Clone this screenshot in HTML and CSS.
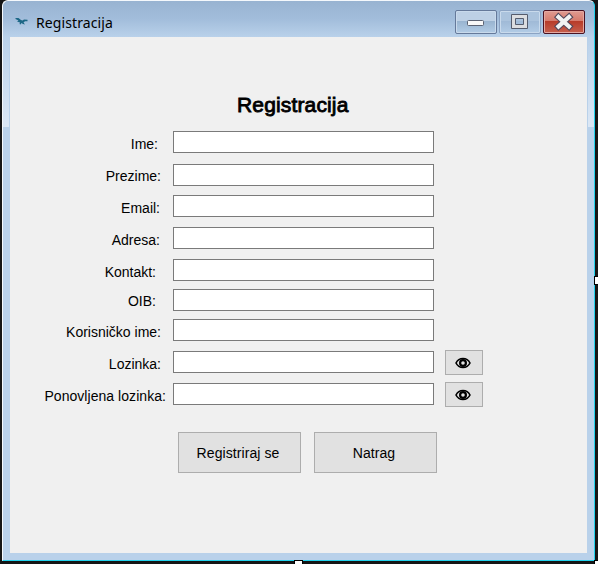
FILE: index.html
```
<!DOCTYPE html>
<html lang="hr">
<head>
<meta charset="utf-8">
<title>Registracija</title>
<link rel="stylesheet" href="styles.css">
</head>
<body>
<div class="window">
  <header class="titlebar">
    <svg class="app-icon" width="14" height="10" viewBox="0 0 14 10"><path d="M.5 1h3L6 3l1.500.5L9 2.500l3.500.2v1.500H10L8.500 5.500 10 7.500 8 7 6.500 6 5.500 7.500 4.500 7l.5-1.500L2 4.500l1.500-1L.5 2z" fill="#1c6786"/></svg>
    <span class="caption">Registracija</span>
    <div class="controls">
      <span class="control"><svg width="40" height="22" viewBox="0 0 40 22"><rect x="11.500" y="9.500" width="16" height="5" rx="1" fill="#f8f8f8" stroke="#5b6273"/></svg></span>
      <span class="control faded"><svg width="40" height="22" viewBox="0 0 40 22"><path d="M11.500 3.500h16v14h-16zM15.500 7.500v6h8v-6z" fill="#dcdde0" fill-rule="evenodd" stroke="#555c6d"/></svg></span>
      <span class="control close"><svg width="40" height="22" viewBox="0 0 40 22"><path d="m14.500 6 10.500 9.500M25 6 14.500 15.500" stroke="#51475a" stroke-width="6.400" stroke-linecap="square"/><path d="m14.500 6 10.500 9.500M25 6 14.500 15.500" stroke="#f2f2f2" stroke-width="4.200" stroke-linecap="square"/></svg></span>
    </div>
  </header>
  <main class="client">
    <h1>Registracija</h1>
    <form>
      <div class="row"><label class="l-ime" for="ime">Ime:</label><input id="ime"></div>
      <div class="row gap-11 up"><label class="l-prezime" for="prezime">Prezime:</label><input id="prezime"></div>
      <div class="row gap-9"><label class="l-email" for="email">Email:</label><input id="email"></div>
      <div class="row gap-10"><label class="l-adresa" for="adresa">Adresa:</label><input id="adresa"></div>
      <div class="row gap-10"><label class="l-kontakt" for="kontakt">Kontakt:</label><input id="kontakt"></div>
      <div class="row gap-8 up"><label class="l-oib" for="oib">OIB:</label><input id="oib"></div>
      <div class="row gap-8"><label class="l-korime" for="korime">Korisničko ime:</label><input id="korime"></div>
      <div class="row gap-10"><label class="l-lozinka" for="lozinka">Lozinka:</label><input id="lozinka"><button type="button" class="eye"><svg width="16" height="12" viewBox="0 0 16 12"><path d="M1 6C4 0 12 0 15 6 12 12 4 12 1 6z" fill="none" stroke="#000" stroke-width="1.600"/><circle cx="8" cy="6" r="2.900" fill="none" stroke="#000" stroke-width="2.200"/></svg></button></div>
      <div class="row gap-10"><label class="l-ponovljena" for="ponovljena">Ponovljena lozinka:</label><input id="ponovljena"><button type="button" class="eye"><svg width="16" height="12" viewBox="0 0 16 12"><path d="M1 6C4 0 12 0 15 6 12 12 4 12 1 6z" fill="none" stroke="#000" stroke-width="1.600"/><circle cx="8" cy="6" r="2.900" fill="none" stroke="#000" stroke-width="2.200"/></svg></button></div>
      <div class="actions"><button type="button">Registriraj se</button><button type="button">Natrag</button></div>
    </form>
  </main>
  <i class="grip grip-right"></i>
  <i class="grip grip-bottom"></i>
  <i class="grip grip-corner"></i>
</div>
</body>
</html>
```
FILE: styles.css
```
* { box-sizing: border-box; }
body {
  margin: 0;
  padding: 0 2px 3px;
  height: 564px;
  background: #151515;
  overflow: hidden;
  font: 14px/16px "Liberation Sans", Arial, sans-serif;
  color: #000;
}
.window {
  width: 593px;
  height: 561px;
  padding: 0 7px;
  border: 1px solid #f4f8fc;
  border-right-color: #22d3ee;
  border-bottom-color: #22d3ee;
  border-radius: 6px 6px 0 0;
  background:
    linear-gradient(#b9d1ea, #dbe7f5) 0 36px / 6px 90px no-repeat,
    linear-gradient(#b9d1ea, #dbe7f5) 100% 36px / 6px 90px no-repeat,
    linear-gradient(#98b3d1, #a2bddb 50%, #b9d1ea) 0 0 / 100% 36px no-repeat,
    #b9d1ea;
}
.titlebar { display: flex; height: 36px; padding-left: 5px; }
.app-icon { margin-top: 16px; }
.caption {
  margin: 12px 0 0 7px;
  font: 14px/20px "Noto Sans", sans-serif;
  letter-spacing: 0.1px;
}
.controls { display: flex; gap: 2px; margin: 9px 2px 0 auto; }
.control {
  width: 42px;
  height: 24px;
  border: 1px solid #65799a;
  border-radius: 2px;
  box-shadow: inset 0 0 0 1px #c9daec;
  background: linear-gradient(#bdd0e5 0 45%, #98b3cf 45%, #b2cce6);
}
.control svg { display: block; }
.faded { border-color: #8ba3c3; background: linear-gradient(#abc3dd 0 45%, #9fb9d6 45%, #b2cce6); }
.close {
  border-color: #4a1222;
  box-shadow: inset 0 0 0 1px #e4a9a2;
  background: linear-gradient(#e09b91, #d67b6d 45%, #b73a28 45%, #c6604e);
}
.client { width: 577px; height: 516px; padding-top: 55px; background: #f0f0f0; }
h1 {
  width: 112px;
  margin: 0 0 14px 227px;
  font-size: 21px;
  font-weight: 400;
  line-height: 25px;
  letter-spacing: 0.15px;
  -webkit-text-stroke: 0.85px #000;
  white-space: nowrap;
}
.row { display: flex; height: 22px; }
.row label { width: 163px; padding-top: 5px; text-align: right; white-space: nowrap; }
.up label { padding-top: 4px; }
.row input { width: 261px; height: 22px; margin: 0; padding: 1px 3px; border: 1px solid #7a7a7a; background: #fff; }
.gap-8 { margin-top: 8px; }
.gap-9 { margin-top: 9px; }
.gap-10 { margin-top: 10px; }
.gap-11 { margin-top: 11px; }
.row .l-ime { padding-right: 15px; }
.row .l-prezime, .row .l-korime, .row .l-lozinka { padding-right: 12px; }
.row .l-email, .row .l-adresa { padding-right: 13px; }
.row .l-kontakt, .row .l-oib { padding-right: 17px; }
.row .l-ponovljena { padding-right: 7px; letter-spacing: 0.05px; }
button { padding: 0; border: 1px solid #adadad; background: #e1e1e1; color: #000; font: inherit; }
.eye { display: flex; flex: none; width: 38px; height: 25px; margin: -1px 0 0 11px; padding: 6px 0 0 9px; }
.actions { display: flex; gap: 13px; margin: 27px 0 0 168px; }
.actions button { width: 123px; height: 41px; padding: 1px 3px 0 0; letter-spacing: 0.08px; }
.grip { position: absolute; background: #fff; border: 1px solid #000; }
.grip-right { left: 594px; top: 276px; width: 8px; height: 9px; }
.grip-bottom { left: 294px; top: 560px; width: 9px; height: 8px; }
.grip-corner { left: 594px; top: 560px; width: 8px; height: 8px; }
```
